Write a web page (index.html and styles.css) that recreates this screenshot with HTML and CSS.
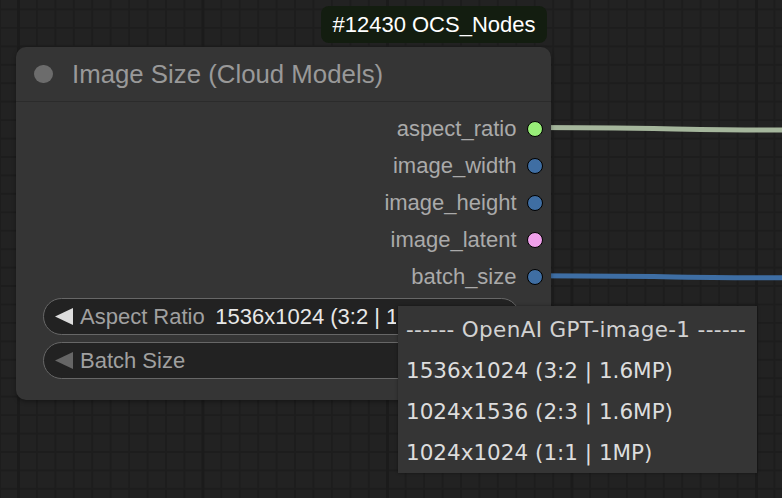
FILE: index.html
```html
<!DOCTYPE html>
<html>
<head>
<meta charset="utf-8">
<link rel="stylesheet" href="styles.css">
</head>
<body>
<div class="canvas">
  <svg class="links" width="782" height="498" viewBox="0 0 782 498">
    <path d="M534 127.6 C 640 127.6, 700 130, 782 130" class="link link-green"/>
    <path d="M534 275.8 C 640 275.8, 700 277.8, 782 277.8" class="link link-blue"/>
  </svg>
  <div class="badge">#12430 OCS_Nodes</div>
  <div class="node">
    <div class="node-title">
      <span class="title-dot"></span>
      <span class="title-text">Image Size (Cloud Models)</span>
    </div>
    <div class="node-body">
      <div class="outputs">
        <div class="out"><span class="out-label">aspect_ratio</span><span class="slot slot-green"></span></div>
        <div class="out"><span class="out-label">image_width</span><span class="slot slot-blue"></span></div>
        <div class="out"><span class="out-label">image_height</span><span class="slot slot-blue"></span></div>
        <div class="out"><span class="out-label">image_latent</span><span class="slot slot-pink"></span></div>
        <div class="out"><span class="out-label">batch_size</span><span class="slot slot-blue"></span></div>
      </div>
      <div class="widgets">
        <div class="widget">
          <svg class="arrow" width="18" height="17" viewBox="0 0 18 17"><polygon points="0,8.5 18,0 18,17" class="arrow-on"/></svg>
          <span class="w-label">Aspect Ratio</span>
          <span class="w-value">1536x1024 (3:2 | 1.6MP)</span>
        </div>
        <div class="widget">
          <svg class="arrow" width="18" height="17" viewBox="0 0 18 17"><polygon points="0,8.5 18,0 18,17" class="arrow-off"/></svg>
          <span class="w-label">Batch Size</span>
        </div>
      </div>
    </div>
  </div>
  <div class="menu">
    <div class="menu-item menu-header">------ OpenAI GPT-image-1 ------</div>
    <div class="menu-item">1536x1024 (3:2 | 1.6MP)</div>
    <div class="menu-item">1024x1536 (2:3 | 1.6MP)</div>
    <div class="menu-item">1024x1024 (1:1 | 1MP)</div>
  </div>
</div>
</body>
</html>
```

FILE: styles.css
```css
* { box-sizing: border-box; }
html, body { margin: 0; padding: 0; }
body {
  width: 782px;
  height: 498px;
  overflow: hidden;
  font-family: "Liberation Sans", Arial, sans-serif;
}
.canvas {
  position: relative;
  width: 782px;
  height: 498px;
  overflow: hidden;
  background-color: #222222;
  background-image:
    linear-gradient(to right, #1b1b1b 3px, transparent 3px),
    linear-gradient(to right, #1d1d1d 1.5px, transparent 1.5px),
    linear-gradient(to bottom, #1d1d1d 1.5px, transparent 1.5px);
  background-size: 184.5px 100%, 18.45px 100%, 100% 18.45px;
  background-position: 17px 0, 17.5px 0, 0 8.5px;
}
.links {
  position: absolute;
  left: 0;
  top: 0;
}
.link { fill: none; stroke-width: 5; }
.link-green { stroke: #a5b69c; }
.link-blue { stroke: #3e6ea4; }

.badge {
  position: absolute;
  left: 321px;
  top: 6px;
  width: 226px;
  height: 37px;
  border-radius: 8px;
  background: #131d10;
  color: #ffffff;
  font-size: 22px;
  display: flex;
  align-items: center;
  justify-content: center;
}

.node {
  position: absolute;
  left: 16px;
  top: 47px;
  width: 535px;
  height: 353px;
  background: #353535;
  border-radius: 10px;
  box-shadow: 0 2px 4px rgba(0,0,0,0.35);
  display: flex;
  flex-direction: column;
}
.node-title {
  height: 55px;
  display: flex;
  align-items: center;
  border-bottom: 1px solid #2b2b2b;
  padding-left: 18px;
}
.title-dot {
  width: 18.5px;
  height: 18.5px;
  border-radius: 50%;
  background: #6c6c6c;
  flex: none;
}
.title-text {
  margin-left: 19.5px;
  font-size: 25.8px;
  color: #999999;
  line-height: 1;
  padding-top: 1px;
}
.node-body {
  padding-top: 8px;
  display: flex;
  flex-direction: column;
}
.outputs {
  display: flex;
  flex-direction: column;
  align-items: flex-end;
  padding-right: 8.5px;
}
.out {
  height: 37px;
  display: flex;
  align-items: center;
  gap: 10px;
}
.out-label {
  font-size: 22px;
  color: #aaaaaa;
  line-height: 1;
}
.slot {
  width: 16px;
  height: 16px;
  border-radius: 50%;
  border: 1.5px solid #000;
  flex: none;
}
.slot-green { background: #98ee78; }
.slot-blue { background: #3f6ea3; }
.slot-pink { background: #efa0ea; }

.widgets {
  margin-top: 3px;
  padding-left: 27px;
  padding-right: 31px;
  display: flex;
  flex-direction: column;
  gap: 7px;
}
.widget {
  height: 37px;
  border: 1.5px solid #676767;
  border-radius: 19px;
  background: #222222;
  display: flex;
  align-items: center;
  padding-left: 10.5px;
  white-space: nowrap;
  overflow: hidden;
}
.arrow { flex: none; }
.arrow-on { fill: #dddddd; }
.arrow-off { fill: #666666; }
.w-label {
  margin-left: 7.5px;
  font-size: 22px;
  color: #a0a0a0;
}
.w-value {
  margin-left: 10.5px;
  font-size: 22px;
  color: #e8e8e8;
  display: inline-block;
  max-width: 181px;
  overflow: hidden;
  white-space: nowrap;
  text-overflow: clip;
}

.menu {
  position: absolute;
  left: 398px;
  top: 306px;
  width: 359px;
  height: 167px;
  background: #353535;
  box-shadow: 0 0 3px rgba(0,0,0,0.4);
  padding-top: 2px;
  font-family: "DejaVu Sans", Verdana, sans-serif;
  font-size: 21.5px;
  color: #dddddd;
}
.menu-item {
  height: 41px;
  display: flex;
  align-items: center;
  padding-left: 8px;
  white-space: nowrap;
}
.menu-header {
  height: 42px;
  color: #d2d2d2;
  letter-spacing: 0.35px;
}
```
